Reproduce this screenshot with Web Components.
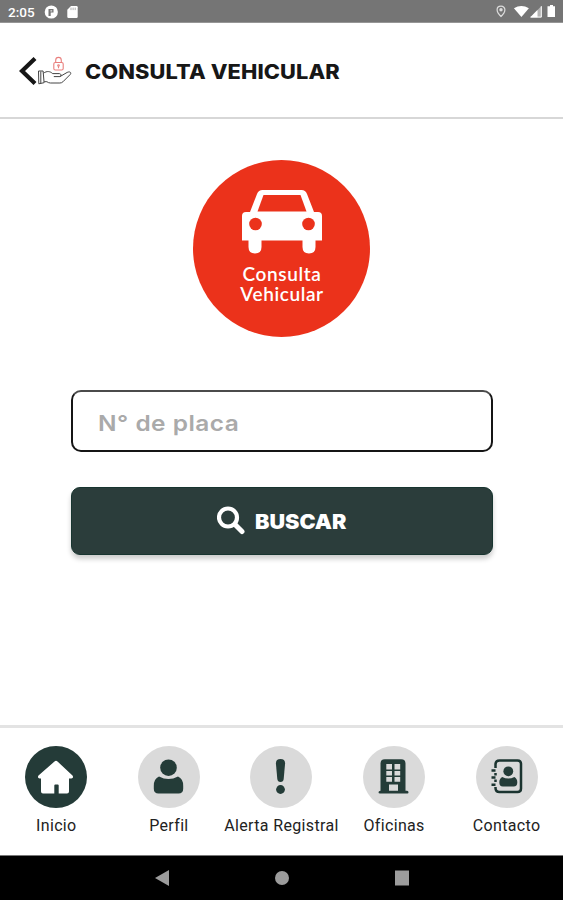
<!DOCTYPE html>
<html lang="es">
<head>
<meta charset="utf-8">
<title>Consulta vehicular</title>
<style>
  body {
    margin: 0;
    background: #fff;
    font-family: Roboto, sans-serif;
  }
</style>
</head>
<body>
<vehicle-app></vehicle-app>

<script>
(() => {
  const define = (name, html) => {
    const template = document.createElement('template');
    template.innerHTML = html;

    customElements.define(name, class extends HTMLElement {
      constructor() {
        super();
        this.attachShadow({mode: 'open'}).appendChild(template.content.cloneNode(true));
      }
    });
  };

  define('status-bar', `
  <style>
    :host {
      display:flex;
      align-items:center;
      box-sizing:border-box;
      height:23px;
      padding:1px 5px 0 8px;
      background:#757575;
      border-bottom:1px solid #969696;
      color:#fff;
      font:500 13.5px/22px Roboto, sans-serif;
    }
    svg { display:block; fill:#fff; }
    .clock { width:36px; }
    .left { display:flex; gap:8px; }
    .right { display:flex; margin-left:auto; }
  </style>
  <span class="clock">2:05</span>
  <div class="left">
    <svg width="15" height="14" viewBox="0 0 15 14">
      <circle cx="7.3" cy="7" r="6.6"/>
      <path d="M4.5 11V4h5v3.6H6.7V11z" fill="#757575"/>
      <path d="M6.4 5.4h1.8v1H6.4z"/>
    </svg>
    <svg width="11" height="14" viewBox="0 0 11 14">
      <path d="M4 1h5.5q1.2 0 1.2 1.2v9.6q0 1.2-1.2 1.2h-8Q.3 13 .3 11.8V4.7z"/>
      <path d="M4 2.6v2.5M6.1 2.6v2.5M8.2 2.6v2.5" stroke="#999" stroke-width=".8"/>
    </svg>
  </div>
  <div class="right">
    <svg width="62" height="14" viewBox="0 0 62 14">
      <path d="M5 1.200c-2.300 0-3.900 1.500-3.900 3.600C1.100 7.800 5 11.500 5 11.500s3.900-3.700 3.900-6.700C8.900 2.700 7.300 1.200 5 1.200z" fill="none" stroke="#ddd" stroke-width="1.200"/>
      <circle cx="5" cy="4.800" r="1.700" fill="#ddd"/>
      <path d="M17.900 3.200Q25.400-1.200 32.900 3.200L25.400 12z"/>
      <path d="M45.500 1v11.200H34.300z" fill="#b4b4b4"/>
      <path d="M41.500 5v7.200h-7.200z"/>
      <path d="M45.300 1.200v10.900H34.600" fill="none" stroke="#fff"/>
      <path d="M54 0h3v1.300h2V12h-7.500V1.300H54z"/>
    </svg>
  </div>`);

  define('app-header', `
  <style>
    :host {
      display:flex;
      align-items:center;
      box-sizing:border-box;
      height:96px;
      padding:0 18px 0 19px;
      border-bottom:2px solid #d7d7d7;
      color:#171717;
    }
    svg { display:block; flex:none; }
    h1 {
      margin:3px 0 0 11px;
      font:800 20px/28px Inter, sans-serif;
      letter-spacing:.1px;
      white-space:nowrap;
      transform:scaleX(1.09);
      transform-origin:0 50%;
    }
  </style>
  <svg width="55" height="34" viewBox="0 0 55 34">
    <path d="M16 5.500L3 18 16 30.500" fill="none" stroke="#161616" stroke-width="4.200"/>
    <g transform="translate(0 1.500)" fill="none" stroke="#444" stroke-width="1" stroke-linejoin="round">
      <path d="M19.500 16.500h4.600l1 11.700-5.300 1.100zM21.800 17v11.700"/>
      <path d="M24.500 18.700c3.500-2.500 6.500-2 9.200.4h6.500c2.400 0 2.300 3-.1 3h-5.300M40.800 22.200l7.400-4.300c2.600-1.300 4.600.2 3 2.100l-7.300 7.300q-1.200 1.200-3 1.200h-9.500q-2-.1-3.500-1.300h-2.700"/>
    </g>
    <g transform="translate(0 3)" fill="none" stroke="#e97f7d" stroke-width="1.100">
      <rect x="34.800" y="6.500" width="9.400" height="7.500" rx="1.500"/>
      <path d="M36.700 6.500V4.300q0-2.900 2.800-2.900t2.800 2.900v2.200"/>
      <circle cx="39.500" cy="9.500" r=".8"/>
      <path d="M39.500 10.300v2"/>
    </g>
  </svg>
  <h1><slot></slot></h1>`);

  define('hero-badge', `
  <style>
    :host {
      display:flex;
      flex-direction:column;
      align-items:center;
      box-sizing:border-box;
      width:177px;
      height:177px;
      padding-top:29px;
      border-radius:50%;
      background:#eb321b;
      color:#fff;
      font:600 19px/20px Lato, sans-serif;
      text-align:center;
    }
    svg { display:block; }
    .label { display:grid; grid-auto-rows:20px; margin:9px 0 0 1px; letter-spacing:.6px; }
  </style>
  <svg width="82" height="66" viewBox="0 0 82 66">
    <path d="M21.500 1h39q4 0 5.500 4l7 18h4q4 0 4 4v24.500h-6.500V58q0 6.500-6.500 6.500T61.500 58v-6.500h-41V58q0 6.500-6.500 6.500T7.500 58v-6.500H1V27q0-4 4-4h4l7-18q1.500-4 5.500-4z" fill="#fff"/>
    <path d="M22.500 6h37l6 16.500h-49z" fill="#eb321b"/>
    <circle cx="14.500" cy="35" r="6.300" fill="#eb321b"/>
    <circle cx="67.500" cy="35" r="6.300" fill="#eb321b"/>
  </svg>
  <div class="label"><slot></slot></div>`);

  define('plate-field', `
  <style>
    :host {
      display:flex;
      align-items:center;
      box-sizing:border-box;
      width:422px;
      height:62px;
      padding:4px 25px 0;
      border:2px solid #151515;
      border-top-color:#4b4b4b;
      border-radius:10px;
      color:#aaa;
      font:600 22px/30px Inter, sans-serif;
      letter-spacing:.45px;
    }
    span { transform:scaleX(1.11); transform-origin:0 50%; }
  </style>
  <span><slot></slot></span>`);

  define('search-button', `
  <style>
    :host {
      display:flex;
      justify-content:center;
      align-items:center;
      gap:10px;
      box-sizing:border-box;
      width:422px;
      height:68px;
      border:1px solid #183530;
      border-radius:9px;
      background:#2b3d3b;
      box-shadow:0 4px 5px rgba(0,0,0,.2);
      color:#fff;
      font:900 20px/28px Inter, sans-serif;
    }
    svg { display:block; margin:-1px 0 0 -7px; }
    span { margin-top:2px; transform:scaleX(1.08); transform-origin:0 50%; }
  </style>
  <svg width="28" height="29" viewBox="0 0 28 29" fill="none" stroke="#fff">
    <circle cx="11" cy="11.500" r="9" stroke-width="4.200"/>
    <path d="M18 18.500l7 7" stroke-width="5" stroke-linecap="round"/>
  </svg>
  <span><slot></slot></span>`);

  define('nav-item', `
  <style>
    :host {
      display:flex;
      flex:1 1 0;
      flex-direction:column;
      align-items:center;
      min-width:0;
      color:#222;
      font:400 16px/20px Roboto, sans-serif;
      letter-spacing:.35px;
      white-space:nowrap;
    }
    div {
      display:flex;
      width:62px;
      height:62px;
      margin-bottom:8px;
      border-radius:50%;
      background:var(--disc, #dadada);
    }
  </style>
  <div><slot name="icon"></slot></div>
  <span><slot></slot></span>`);

  define('bottom-nav', `
  <style>
    :host {
      display:flex;
      box-sizing:border-box;
      height:131px;
      padding:18px 0 0;
      border-top:3px solid #e3e3e3;
      border-bottom:1px solid #777;
    }
    svg { display:block; fill:#243c38; }
    .active { --disc:#243b38; }
  </style>
  <nav-item class="active">
    <svg slot="icon" width="62" height="62" viewBox="0 0 62 62">
      <path d="M29.500 15.500q1.500-1.300 3 0l15 14q1.500 2.200-1.200 2.900H44v13q0 2-2 2h-8.300v-8q0-1-1-1h-2.400q-1 0-1 1v8H18q-2 0-2-2v-13h-1.300q-2.700-.7-1.200-2.900z" fill="#fff"/>
    </svg>Inicio
  </nav-item>
  <nav-item>
    <svg slot="icon" width="62" height="62" viewBox="0 0 62 62">
      <circle cx="30.500" cy="21.700" r="8.300"/>
      <path d="M21 30.500q9.500 5 19 0 5.200 2.300 5.200 9.200v3.100q0 4.700-4.700 4.700h-20q-4.700 0-4.700-4.700v-3.100q0-6.900 5.200-9.200z"/>
    </svg>Perfil
  </nav-item>
  <nav-item>
    <svg slot="icon" width="62" height="62" viewBox="0 0 62 62">
      <path d="M25.900 17.300q0-4.300 4.600-4.300t4.600 4.300l-1.400 15.700q-.3 3-3.200 3t-3.200-3z"/>
      <circle cx="30.500" cy="43.500" r="4.400"/>
    </svg>Alerta Registral
  </nav-item>
  <nav-item>
    <svg slot="icon" width="62" height="62" viewBox="0 0 62 62">
      <path d="M17.500 17.500q0-4.300 4.300-4.300h16.400q4.300 0 4.300 4.300v27.300H44q1.500 0 1.500 1.500T44 47.500H17q-1.500 0-1.500-1.300t2-1.400z"/>
      <path d="M23.300 18h5.700v5.500h-5.700zm8.200 0h5.700v5.500h-5.700zM23.300 25h5.700v4.500h-5.700zm8.200 0h5.700v4.500h-5.700zM23.300 31h5.700v4.800h-5.700zm8.200 0h5.700v4.800h-5.700zM26 38.500h9v6.300h-9z" fill="#dadada"/>
    </svg>Oficinas
  </nav-item>
  <nav-item>
    <svg slot="icon" width="62" height="62" viewBox="0 0 62 62">
      <path d="M19.500 22v-3.500q0-4 4-4h18q3.500 0 3.500 3.500v24.500q0 3.500-3.500 3.500h-18q-4 0-4-4V41M19.500 27v2.500M19.500 33.500V36M15.500 24.500h4M15.500 31.500h4M15.500 38.800h4" fill="none" stroke="#1b3430" stroke-width="2.500"/>
      <circle cx="32.300" cy="25.300" r="4.900"/>
      <path d="M26.200 31q6.100 3 12.200 0 2.900 1.700 2.900 5.200 0 4.300-3.600 4.300H26.900q-3.600 0-3.600-4.300 0-3.500 2.900-5.200z"/>
    </svg>Contacto
  </nav-item>`);

  define('system-bar', `
  <style>
    :host {
      display:flex;
      justify-content:center;
      align-items:center;
      flex:1;
      gap:104px;
      background:#000;
    }
    svg { display:block; fill:#9c9c9c; }
  </style>
  <svg width="16" height="18" viewBox="0 0 16 18"><path d="M15 1v16L1 9z"/></svg>
  <svg width="16" height="18" viewBox="0 0 16 18"><circle cx="8" cy="9" r="7"/></svg>
  <svg width="16" height="18" viewBox="0 0 16 18"><path d="M1 1.500h14v15H1z"/></svg>`);

  define('vehicle-app', `
  <style>
    :host {
      display:flex;
      flex-direction:column;
      width:563px;
      height:900px;
      overflow:hidden;
    }
    main {
      display:flex;
      flex-direction:column;
      align-items:center;
      box-sizing:border-box;
      height:606px;
      padding-top:41px;
    }
    hero-badge { margin-bottom:53px; }
    plate-field { margin-bottom:35px; }
  </style>
  <status-bar></status-bar>
  <app-header>CONSULTA VEHICULAR</app-header>
  <main>
    <hero-badge><span>Consulta</span><span>Vehicular</span></hero-badge>
    <plate-field>N° de placa</plate-field>
    <search-button>BUSCAR</search-button>
  </main>
  <bottom-nav></bottom-nav>
  <system-bar></system-bar>`);
})();
</script>
</body>
</html>
